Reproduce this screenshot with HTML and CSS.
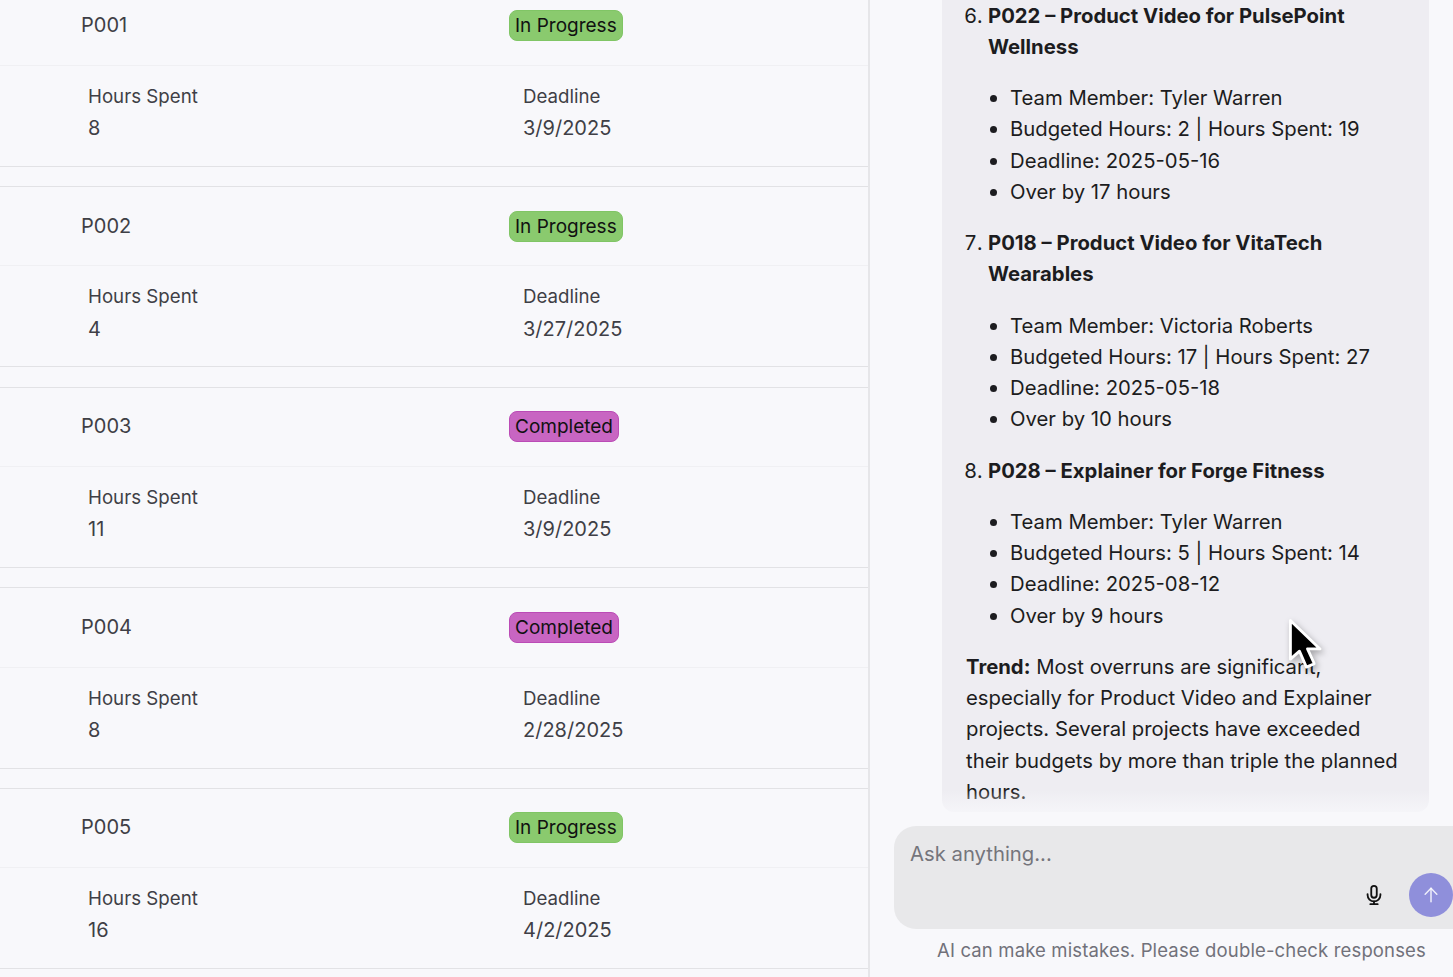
FILE: index.html
```html
<!DOCTYPE html>
<html lang="en">
<head>
<meta charset="utf-8">
<title>Projects</title>
<link rel="stylesheet" href="styles.css">
</head>
<body>
<div class="app">
  <main class="projects">
    <div class="card-list">
      <section class="card">
        <div class="card-head"><span class="pid">P001</span><span class="pill pill-progress">In Progress</span></div>
        <div class="card-body">
          <div class="field"><span class="label">Hours Spent</span><span>8</span></div>
          <div class="field"><span class="label">Deadline</span><span>3/9/2025</span></div>
        </div>
      </section>
      <section class="card">
        <div class="card-head"><span class="pid">P002</span><span class="pill pill-progress">In Progress</span></div>
        <div class="card-body">
          <div class="field"><span class="label">Hours Spent</span><span>4</span></div>
          <div class="field"><span class="label">Deadline</span><span>3/27/2025</span></div>
        </div>
      </section>
      <section class="card">
        <div class="card-head"><span class="pid">P003</span><span class="pill pill-done">Completed</span></div>
        <div class="card-body">
          <div class="field"><span class="label">Hours Spent</span><span>11</span></div>
          <div class="field"><span class="label">Deadline</span><span>3/9/2025</span></div>
        </div>
      </section>
      <section class="card">
        <div class="card-head"><span class="pid">P004</span><span class="pill pill-done">Completed</span></div>
        <div class="card-body">
          <div class="field"><span class="label">Hours Spent</span><span>8</span></div>
          <div class="field"><span class="label">Deadline</span><span>2/28/2025</span></div>
        </div>
      </section>
      <section class="card">
        <div class="card-head"><span class="pid">P005</span><span class="pill pill-progress">In Progress</span></div>
        <div class="card-body">
          <div class="field"><span class="label">Hours Spent</span><span>16</span></div>
          <div class="field"><span class="label">Deadline</span><span>4/2/2025</span></div>
        </div>
      </section>
    </div>
  </main>
  <aside class="chat">
    <div class="messages">
      <div class="bubble">
        <ol start="6" class="overruns">
          <li>
            <p><strong>P022 – Product Video for PulsePoint Wellness</strong></p>
            <ul>
              <li>Team Member: Tyler Warren</li>
              <li>Budgeted Hours: 2 | Hours Spent: 19</li>
              <li>Deadline: 2025-05-16</li>
              <li>Over by 17 hours</li>
            </ul>
          </li>
          <li>
            <p><strong>P018 – Product Video for VitaTech Wearables</strong></p>
            <ul>
              <li>Team Member: Victoria Roberts</li>
              <li>Budgeted Hours: 17 | Hours Spent: 27</li>
              <li>Deadline: 2025-05-18</li>
              <li>Over by 10 hours</li>
            </ul>
          </li>
          <li>
            <p><strong>P028 – Explainer for Forge Fitness</strong></p>
            <ul>
              <li>Team Member: Tyler Warren</li>
              <li>Budgeted Hours: 5 | Hours Spent: 14</li>
              <li>Deadline: 2025-08-12</li>
              <li>Over by 9 hours</li>
            </ul>
          </li>
        </ol>
        <p class="trend"><strong>Trend:</strong> Most overruns are significant, especially for Product Video and Explainer projects. Several projects have exceeded their budgets by more than triple the planned hours.</p>
      </div>
    </div>
    <div class="composer">
      <div class="placeholder">Ask anything...</div>
      <div class="composer-actions">
        <svg class="mic" viewBox="0 0 24 24" width="22" height="22" fill="none" stroke="#111" stroke-width="2" stroke-linecap="round" stroke-linejoin="round" aria-hidden="true">
          <rect x="9" y="2" width="6" height="13" rx="3"/>
          <path d="M5 11v1a7 7 0 0 0 14 0v-1"/>
          <path d="M12 19v3"/>
          <path d="M8 22h8"/>
        </svg>
        <button class="send" type="button" aria-label="Send">
          <svg viewBox="0 0 24 24" width="20" height="20" fill="none" stroke="#ffffff" stroke-opacity="0.85" stroke-width="1.8" stroke-linecap="round" stroke-linejoin="round" aria-hidden="true">
            <path d="M12 20V4"/>
            <path d="M5 11l7-7 7 7"/>
          </svg>
        </button>
      </div>
    </div>
    <p class="disclaimer">AI can make mistakes. Please double-check responses</p>
  </aside>
</div>
<svg class="cursor" viewBox="0 0 36 48" width="41" height="55" aria-hidden="true">
  <path d="M3 2 L3 36 L11 29 L17 43 L24 40 L18 27 L29 27 Z" fill="#000" stroke="#fff" stroke-width="2.5" stroke-linejoin="round"/>
</svg>
</body>
</html>
```
FILE: styles.css
```css
* { box-sizing: border-box; }

html, body {
  margin: 0;
  height: 100%;
  overflow: hidden;
}

body {
  background: #f8f8fb;
  color: #1c1c20;
  font-family: Inter, "Liberation Sans", sans-serif;
  font-size: 20.3px;
  line-height: 31.25px;
}

.app {
  display: flex;
  height: 977px;
  overflow: hidden;
}

.projects {
  flex: 0 0 870px;
  border-right: 2px solid #e6e6e9;
  overflow: hidden;
  font-size: 20px;
}

.card-list {
  display: flex;
  flex-direction: column;
  gap: 19.2px;
  margin-top: -14.6px;
}

.card {
  flex: 0 0 181.4px;
  border-top: 1.5px solid #e2e2e5;
  border-bottom: 1.5px solid #e2e2e5;
  color: #3f3f46;
}

.card:first-child { border-top-color: transparent; }

.card-head {
  display: grid;
  grid-template-columns: 428px 1fr;
  align-items: center;
  height: 79.5px;
  padding-left: 81px;
  border-bottom: 1px solid #f0f0f3;
}

.pill {
  justify-self: start;
  padding: 0 5px;
  border-radius: 8px;
  border: 1px solid;
  color: #111;
  font-size: 19px;
  line-height: 29px;
}

.pill-progress {
  background: #8aca6e;
  border-color: #80c565;
}

.pill-done {
  background: #c865c2;
  border-color: #bb4bb6;
}

.card-body {
  display: grid;
  grid-template-columns: 435px 1fr;
  padding: 15px 0 0 88px;
}

.field {
  display: flex;
  flex-direction: column;
  gap: 1px;
}

.label { font-size: 18.7px; }

.chat {
  flex: 0 0 620px;
  display: flex;
  flex-direction: column;
  height: 977px;
}

.messages {
  position: relative;
  height: 826px;
  padding: 0 0 14px 72px;
  display: flex;
  flex-direction: column;
  justify-content: flex-end;
  overflow: hidden;
}

.messages::after {
  content: "";
  position: absolute;
  left: 0;
  right: 0;
  bottom: 0;
  height: 36px;
  background: linear-gradient(to bottom, rgba(248, 248, 251, 0), #f8f8fb 85%);
}

.bubble {
  flex: none;
  width: 487px;
  padding: 40px 24px 5px 24px;
  background: #eeedf2;
  border-radius: 0 0 12px 12px;
}

.bubble p { margin: 0; }

.overruns {
  margin: 0 0 20px;
  padding-left: 22px;
}

.overruns > li + li { margin-top: 20px; }

.overruns ul {
  margin: 20px 0 0;
  padding-left: 22px;
  list-style: disc;
}

.composer {
  width: 605px;
  height: 103px;
  margin-left: 24px;
  padding: 12px 16px 0;
  background: #e8e8ea;
  border-radius: 22px;
  position: relative;
}

.placeholder { color: #75757c; }

.composer-actions {
  position: absolute;
  left: 469px;
  top: 47px;
  display: flex;
  align-items: center;
  gap: 24px;
}

.mic { display: block; }

.send {
  display: flex;
  align-items: center;
  justify-content: center;
  width: 44px;
  height: 44px;
  padding: 0;
  border: 0;
  border-radius: 50%;
  background: #8f8fdb;
}

.disclaimer {
  margin: 6px 0 0 24px;
  width: 575px;
  text-align: center;
  font-size: 18.5px;
  letter-spacing: 0.15px;
  color: #71717a;
}

.cursor {
  position: absolute;
  left: 1287px;
  top: 618px;
  filter: drop-shadow(2px 3px 3px rgba(0, 0, 0, 0.3));
}
```
